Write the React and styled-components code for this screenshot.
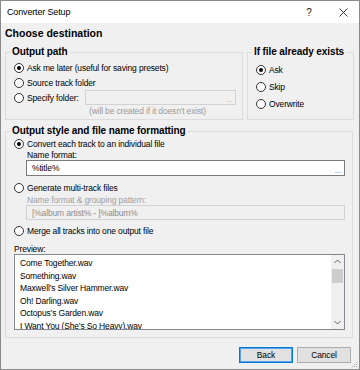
import React from 'react';
import styled, { createGlobalStyle } from 'styled-components';

const GlobalStyle = createGlobalStyle`
  html, body {
    margin: 0;
    padding: 0;
    background: #ffffff;
  }
  body {
    font-family: "Liberation Sans", Arial, sans-serif;
  }
  * {
    box-sizing: border-box;
  }
`;

const Window = styled.div`
  position: relative;
  width: 360px;
  height: 370px;
  border: 1px solid #8a8a8a;
  background: #f0f0f0;
  display: flex;
  flex-direction: column;
  font-size: 8.5px;
  letter-spacing: -0.15px;
  color: #000;
`;

const TitleBar = styled.div`
  height: 22px;
  flex: none;
  background: #fff;
  display: flex;
  align-items: center;
  padding-left: 6px;
  font-size: 9px;
`;

const TitleText = styled.div`
  flex: 1;
`;

const CaptionButton = styled.div`
  width: ${p => p.$w}px;
  margin-right: ${p => p.$mr || 0}px;
  height: 22px;
  display: flex;
  align-items: center;
  justify-content: center;
  font-size: 10px;
  color: #222;
`;

const Body = styled.div`
  flex: 1;
  display: flex;
  flex-direction: column;
  padding: 0 5px 0 4px;
`;

const Heading = styled.div`
  font-weight: bold;
  font-size: 10.5px;
  letter-spacing: 0;
  line-height: 16px;
  margin-top: 2px;
`;

const TopRow = styled.div`
  display: flex;
  gap: 4px;
  margin-top: 5px;
  height: 74px;
`;

const Group = styled.fieldset`
  margin: ${p => p.$mt || 0}px ${p => p.$mr || 0}px 0 0;
  padding: ${p => p.$pt || 0}px ${p => p.$pr || 7}px ${p => p.$pb || 0}px 8px;
  border: 1px solid #dcdcdc;
  min-width: 0;
  flex: ${p => (p.$w || p.$fixed ? 'none' : '1')};
  width: ${p => (p.$w ? `${p.$w}px` : 'auto')};
  display: flex;
  flex-direction: column;
`;

const Legend = styled.legend`
  font-weight: bold;
  font-size: 10px;
  letter-spacing: -0.1px;
  line-height: 12px;
  white-space: nowrap;
  padding: 0 2px;
  margin-left: -4px;
`;

const Row = styled.div`
  display: flex;
  align-items: center;
  height: ${p => p.$h}px;
  margin-top: ${p => p.$mt || 0}px;
  gap: 2px;
  white-space: nowrap;
`;

const Radio = styled.span`
  position: relative;
  flex: none;
  width: 10px;
  height: 10px;
  border-radius: 50%;
  border: 1px solid #333;
  background: #fff;
  margin-right: 1px;

  &::after {
    content: '';
    display: ${p => (p.$checked ? 'block' : 'none')};
    position: absolute;
    left: 2px;
    top: 2px;
    width: 4px;
    height: 4px;
    border-radius: 50%;
    background: #000;
  }
`;

const Field = styled.div`
  display: flex;
  align-items: center;
  justify-content: space-between;
  width: ${p => (p.$w ? `${p.$w}px` : 'auto')};
  margin-left: ${p => (p.$w ? 'auto' : '0')};
  height: ${p => p.$h}px;
  border: 1px solid ${p => (p.$disabled ? '#d2d2d2' : '#7a7a7a')};
  background: ${p => (p.$disabled ? '#f0f0f0' : '#fff')};
  color: ${p => (p.$disabled ? '#8d8d8d' : '#000')};
  padding: 0 3px 0 5px;
`;

const Dots = styled.span`
  align-self: flex-end;
  font-size: 8px;
  line-height: 9px;
  color: ${p => (p.$disabled ? '#a8a8a8' : '#7a5a5a')};
`;

const Note = styled.div`
  height: 12px;
  line-height: 12px;
  padding-left: 75px;
  color: #9a9a9a;
`;

const Indent = styled.div`
  margin-left: 12px;
  margin-top: ${p => p.$mt || 0}px;
  display: flex;
  flex-direction: column;
`;

const Label = styled.div`
  height: 10px;
  line-height: 10px;
  padding-left: 1px;
  color: ${p => (p.$disabled ? '#a0a0a0' : '#000')};
`;

const PreviewLabel = styled.div`
  height: 10px;
  line-height: 10px;
  margin-top: 7px;
`;

const ListBox = styled.div`
  height: 76px;
  border: 1px solid #828790;
  background: #fff;
  display: flex;
`;

const Items = styled.div`
  flex: 1;
  overflow: hidden;
  padding: 2px 5px;
  line-height: 12.5px;
  white-space: nowrap;
`;

const ScrollBar = styled.div`
  width: 13px;
  flex: none;
  background: #f0f0f0;
  display: flex;
  flex-direction: column;
`;

const Arrow = styled.div`
  height: 13px;
  display: flex;
  align-items: center;
  justify-content: center;
`;

const Thumb = styled.div`
  height: 14px;
  margin: 1px 1px 0;
  background: #cdcdcd;
`;

const Track = styled.div`
  flex: 1;
`;

const Footer = styled.div`
  display: flex;
  justify-content: flex-end;
  gap: 4px;
  margin-top: 9px;
  padding-right: 3px;
`;

const Button = styled.div`
  width: 54px;
  height: 16px;
  display: flex;
  align-items: center;
  justify-content: center;
  background: #e1e1e1;
  border: 1px solid ${p => (p.$default ? '#0078d7' : '#adadad')};
  box-shadow: ${p => (p.$default ? 'inset 0 0 0 1px #5aa3e6' : 'none')};
`;

const Grip = styled.svg`
  position: absolute;
  right: 1px;
  bottom: 1px;
`;

const Chevron = ({ up }) => (
  <svg width="7" height="5" viewBox="0 0 7 5">
    <polyline
      points={up ? '0.5,4 3.5,1 6.5,4' : '0.5,1 3.5,4 6.5,1'}
      fill="none"
      stroke="#606060"
      strokeWidth="1"
    />
  </svg>
);

const tracks = [
  'Come Together.wav',
  'Something.wav',
  'Maxwell’s Silver Hammer.wav',
  'Oh! Darling.wav',
  'Octopus’s Garden.wav',
  'I Want You (She’s So Heavy).wav',
];

export default function App() {
  return (
    <>
      <GlobalStyle />
      <Window>
        <TitleBar>
          <TitleText>Converter Setup</TitleText>
          <CaptionButton $w={30} $mr={3}>?</CaptionButton>
          <CaptionButton $w={32}>
            <svg width="9" height="9" viewBox="0 0 9 9">
              <path d="M0.5 0.5 L8.5 8.5 M8.5 0.5 L0.5 8.5" stroke="#222" strokeWidth="0.9" />
            </svg>
          </CaptionButton>
        </TitleBar>
        <Body>
          <Heading>Choose destination</Heading>
          <TopRow>
            <Group $pt={2} $pr={6}>
              <Legend>Output path</Legend>
              <Row $h={15}><Radio $checked />Ask me later (useful for saving presets)</Row>
              <Row $h={15}><Radio />Source track folder</Row>
              <Row $h={15}>
                <Radio />Specify folder:
                <Field $w={151} $h={15} $disabled>
                  <span />
                  <Dots $disabled>...</Dots>
                </Field>
              </Row>
              <Note>(will be created if it doesn't exist)</Note>
            </Group>
            <Group $w={107} $pt={3}>
              <Legend>If file already exists</Legend>
              <Row $h={17}><Radio $checked />Ask</Row>
              <Row $h={17}><Radio />Skip</Row>
              <Row $h={17}><Radio />Overwrite</Row>
            </Group>
          </TopRow>
          <Group $mt={5} $mr={1} $pb={7} $fixed>
            <Legend>Output style and file name formatting</Legend>
            <Row $h={12} $mt={1}><Radio $checked />Convert each track to an individual file</Row>
            <Indent>
              <Label>Name format:</Label>
              <Field $h={16}>
                <span>%title%</span>
                <Dots>...</Dots>
              </Field>
            </Indent>
            <Row $h={12} $mt={6}><Radio />Generate multi-track files</Row>
            <Indent $mt={1}>
              <Label $disabled>Name format &amp; grouping pattern:</Label>
              <Field $h={15} $disabled>
                <span>[%album artist% - ]%album%</span>
              </Field>
            </Indent>
            <Row $h={12} $mt={5}><Radio />Merge all tracks into one output file</Row>
            <PreviewLabel>Preview:</PreviewLabel>
            <ListBox>
              <Items>
                {tracks.map(t => (
                  <div key={t}>{t}</div>
                ))}
              </Items>
              <ScrollBar>
                <Arrow><Chevron up /></Arrow>
                <Thumb />
                <Track />
                <Arrow><Chevron /></Arrow>
              </ScrollBar>
            </ListBox>
          </Group>
          <Footer>
            <Button $default>Back</Button>
            <Button>Cancel</Button>
          </Footer>
        </Body>
        <Grip width="7" height="7" viewBox="0 0 7 7">
          <rect x="5" y="1" width="1" height="1" fill="#b0b0b0" />
          <rect x="3" y="3" width="1" height="1" fill="#b0b0b0" />
          <rect x="5" y="3" width="1" height="1" fill="#b0b0b0" />
          <rect x="1" y="5" width="1" height="1" fill="#b0b0b0" />
          <rect x="3" y="5" width="1" height="1" fill="#b0b0b0" />
          <rect x="5" y="5" width="1" height="1" fill="#b0b0b0" />
        </Grip>
      </Window>
    </>
  );
}
